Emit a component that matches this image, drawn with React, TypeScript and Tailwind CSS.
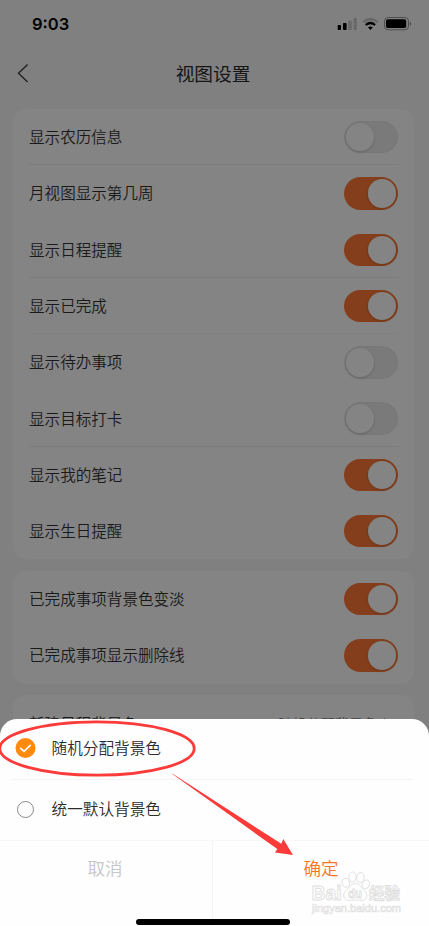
import type { ReactNode } from 'react';

const FONT = "font-['Inter','Noto_Sans_CJK_SC',sans-serif]";

type Item = { label: string; on: boolean; line?: string };

const VIEW_ITEMS: Item[] = [
  { label: '显示农历信息', on: false, line: 'bg-[#7d7d7d]' },
  { label: '月视图显示第几周', on: true },
  { label: '显示日程提醒', on: true, line: 'bg-[#7c7c7c]' },
  { label: '显示已完成', on: true, line: 'bg-[#808080]' },
  { label: '显示待办事项', on: false, line: 'bg-[#828282]' },
  { label: '显示目标打卡', on: false, line: 'bg-[#7c7c7c]' },
  { label: '显示我的笔记', on: true },
  { label: '显示生日提醒', on: true },
];

const DONE_ITEMS: Item[] = [
  { label: '已完成事项背景色变淡', on: true },
  { label: '已完成事项显示删除线', on: true },
];

function Toggle({ on }: { on: boolean }) {
  return (
    <span
      className={
        'flex h-[32.4px] w-[54px] items-center rounded-full ' +
        (on ? 'justify-end bg-[#843e1b] px-[2px]' : 'justify-start border border-[#777777] bg-[#7a7a7a] px-px')
      }
    >
      <span className="size-[28.4px] rounded-full bg-[#848484] shadow-[0_1px_3px_rgba(0,0,0,0.16)]" />
    </span>
  );
}

function Row({ label, on, line }: Item) {
  return (
    <div className="flex h-[56.3px] flex-col pr-[15.5px] pl-4">
      <div className="flex flex-1 items-center justify-between">
        <span className="pt-[2px] pl-[0.5px] text-[15.57px] leading-6 font-[350] text-[#1a1a1a]">{label}</span>
        <Toggle on={on} />
      </div>
      <div className={'-mt-px h-px w-[370px] ' + (line ?? '')} />
    </div>
  );
}

function Card({ children }: { children: ReactNode }) {
  return <section className="ml-[12.5px] w-[401px] rounded-[13px] bg-[#848484]">{children}</section>;
}

function StatusIcons() {
  return (
    <svg width="76" height="16" viewBox="337 16 76 16" fill="none">
      <rect x="337.7" y="25" width="3.3" height="5" rx="0.8" fill="#000" />
      <rect x="343" y="23" width="3.6" height="7" rx="0.8" fill="#000" />
      <rect x="348.2" y="20.5" width="3.6" height="9.5" rx="0.8" fill="#6a6a6a" />
      <rect x="353.4" y="18" width="3.6" height="12" rx="0.8" fill="#6a6a6a" />
      <path d="M363.2 22.1Q370.4 16.2 377.6 22.1" stroke="#686868" strokeWidth="2.5" />
      <path d="M365.7 25Q370.4 20.9 375.1 25" stroke="#000" strokeWidth="2.3" />
      <path d="M368 27.3Q370.4 25.6 372.8 27.3L370.4 30Z" fill="#000" />
      <rect x="384.5" y="17.5" width="24" height="12.3" rx="3.6" stroke="#4d4d4d" />
      <rect x="386" y="19.3" width="20.2" height="8.7" rx="1.8" fill="#000" />
      <path d="M409.8 21.7q1.4.6 1.4 2t-1.4 2z" fill="#4d4d4d" />
    </svg>
  );
}

function Annotations() {
  return (
    <svg className="pointer-events-none absolute inset-0" width="429" height="926" viewBox="0 0 429 926" fill="none">
      <ellipse cx="97" cy="748.5" rx="97.2" ry="26.7" stroke="#fb3a3a" strokeWidth="2.8" />
      <path d="M171.6 773.6L173 774L281.3 843.8L283.3 839L293 855L275 852.5L277.3 849Z" fill="#fb3a3a" />
    </svg>
  );
}

function Watermark() {
  return (
    <svg
      className="pointer-events-none absolute top-[868px] left-[308px]"
      width="100"
      height="48"
      viewBox="308 868 100 48"
      fill="#fff"
      stroke="#dedede"
      strokeWidth="0.9"
    >
      <ellipse cx="345.8" cy="882.8" rx="3.6" ry="4.5" transform="rotate(-18 345.8 882.8)" />
      <ellipse cx="352.5" cy="877" rx="3.7" ry="5" />
      <ellipse cx="360.4" cy="877.5" rx="3.7" ry="5" transform="rotate(10 360.4 877.5)" />
      <ellipse cx="365.8" cy="884.3" rx="3.5" ry="4.5" transform="rotate(18 365.8 884.3)" />
      <path d="M355.3 883.5c-3.700 0-5.300 3.200-7.300 5.300-3.200 2.700-5.300 5-3.700 8.800 2 4.500 7 2.300 11 2.300s9 2.200 11-2.300c1.600-3.800-.5-6.100-3.700-8.800-2-2.100-3.600-5.300-7.300-5.300z" />
      <text x="311.5" y="900" fontSize="20" fontWeight="700" fontFamily="Liberation Sans, sans-serif" textLength="30" lengthAdjust="spacingAndGlyphs">Bai</text>
      <text x="348" y="897.5" fontSize="12.5" fontWeight="700" fontFamily="Liberation Sans, sans-serif" textLength="14" lengthAdjust="spacingAndGlyphs">du</text>
      <text x="369" y="898.5" fontSize="15.5" fontWeight="700" fontFamily="Noto Sans CJK SC, sans-serif" textLength="31" lengthAdjust="spacingAndGlyphs">经验</text>
      <text x="312" y="911.5" fontSize="10" strokeWidth="0.6" fontFamily="Liberation Sans, sans-serif" textLength="89" lengthAdjust="spacingAndGlyphs">jingyan.baidu.com</text>
    </svg>
  );
}

export default function App() {
  return (
    <main className={'relative h-[926px] w-[429px] overflow-hidden bg-[#808080] ' + FONT}>
      <div className="flex h-[46px] items-center justify-between pt-[1px] pr-4 pl-8">
        <span className="pt-px text-[16.5px] leading-5 font-semibold text-black">9:03</span>
        <StatusIcons />
      </div>
      <header className="grid h-[63px] grid-cols-[1fr_auto_1fr] items-center pr-[19px] pb-[9px] pl-4">
        <svg width="14" height="22" viewBox="0 0 14 22" fill="none" stroke="#222" strokeWidth="1.4">
          <path d="M11.6 2.5L2.5 11.3L11.6 20" />
        </svg>
        <h1 className="pt-[3px] text-[18.7px] leading-7 font-normal text-[#151515]">视图设置</h1>
      </header>

      <div className="flex flex-col gap-[11.6px]">
        <Card>
          {VIEW_ITEMS.map((item) => (
            <Row key={item.label} {...item} />
          ))}
        </Card>
        <Card>
          {DONE_ITEMS.map((item) => (
            <Row key={item.label} {...item} />
          ))}
        </Card>
        <Card>
          <div className="flex h-[56.3px] items-center justify-between pr-[24px] pl-4">
            <span className="pt-[2px] pl-[0.5px] text-[15.57px] font-[350] text-[#1a1a1a]">新建日程背景色</span>
            <span className="flex items-center gap-[5px] text-[14.2px] font-[350] text-[#474747]">
              随机分配背景色
              <svg width="7" height="12" viewBox="0 0 7 12" fill="none" stroke="#555">
                <path d="M1 1l5 5-5 5" />
              </svg>
            </span>
          </div>
        </Card>
      </div>

      <section className="absolute inset-x-0 bottom-0 flex h-[207px] flex-col rounded-t-[17px] bg-[#fefefe] text-[#2d2d2d]">
        <div className="mr-[16px] ml-[13px] flex h-[61px] items-center border-b border-[#f3f3f3] pb-[2px] pl-[2px]">
          <svg width="21" height="21" viewBox="0 0 21 21" fill="none">
            <circle cx="10.5" cy="10" r="10" fill="#ff8a0b" />
            <path d="M5.2 9.8L9 13.4L15.8 6.9" stroke="#fff" strokeWidth="1.6" />
          </svg>
          <span className="ml-[15.5px] pt-[1px] text-[15.65px] font-[350]">随机分配背景色</span>
        </div>
        <div className="ml-3 flex h-[60px] items-center pb-[2px] pl-[3px]">
          <span className="ml-[2px] size-[17px] rounded-full border border-[#888]" />
          <span className="ml-[17.5px] pt-[2px] text-[15.65px] font-[350]">统一默认背景色</span>
        </div>
        <div className="grid flex-1 grid-cols-[213px_1fr] border-t border-[#f6f6f6] text-[17.5px] font-[350]">
          <button className="flex items-start justify-center border-r border-[#f4f4f4] pt-[15px] pr-[2px] text-[#c6c6c6]">取消</button>
          <button className="flex items-start justify-center pt-[15px] text-[#ff7524]">确定</button>
        </div>
      </section>

      <div className="absolute bottom-[1.5px] left-[136px] h-[5.5px] w-[154px] rounded-full bg-black" />
      <Annotations />
      <Watermark />
    </main>
  );
}
